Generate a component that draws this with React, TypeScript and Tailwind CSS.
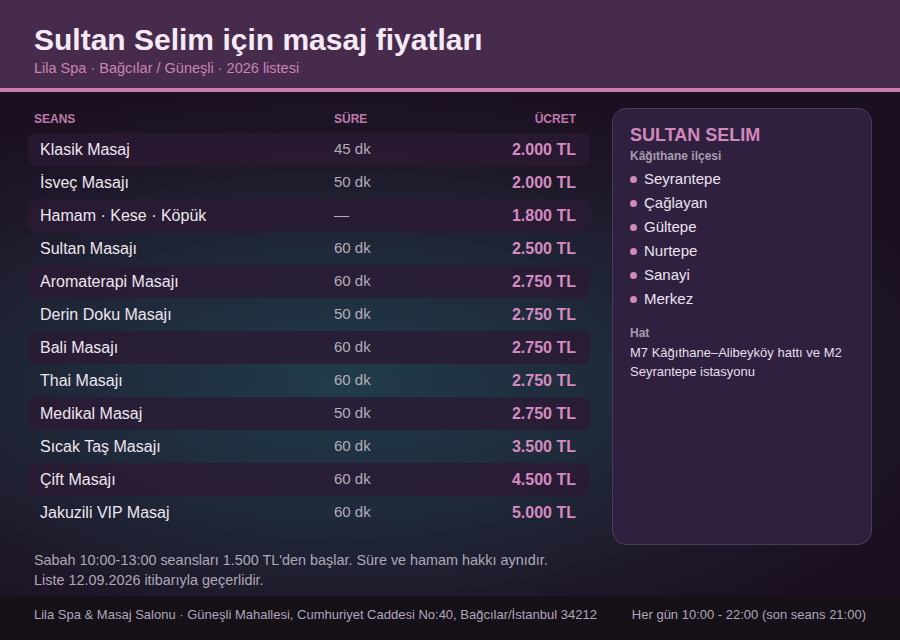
import React from "react";

const rows: [string, string, string][] = [
  ["Klasik Masaj", "45 dk", "2.000 TL"],
  ["İsveç Masajı", "50 dk", "2.000 TL"],
  ["Hamam · Kese · Köpük", "—", "1.800 TL"],
  ["Sultan Masajı", "60 dk", "2.500 TL"],
  ["Aromaterapi Masajı", "60 dk", "2.750 TL"],
  ["Derin Doku Masajı", "50 dk", "2.750 TL"],
  ["Bali Masajı", "60 dk", "2.750 TL"],
  ["Thai Masajı", "60 dk", "2.750 TL"],
  ["Medikal Masaj", "50 dk", "2.750 TL"],
  ["Sıcak Taş Masajı", "60 dk", "3.500 TL"],
  ["Çift Masajı", "60 dk", "4.500 TL"],
  ["Jakuzili VIP Masaj", "60 dk", "5.000 TL"],
];

const hoods = ["Seyrantepe", "Çağlayan", "Gültepe", "Nurtepe", "Sanayi", "Merkez"];

export default function App() {
  return (
    <div
      className="w-[900px] h-[640px] overflow-hidden flex flex-col text-[#ece4ef]"
      style={{ fontFamily: '"Liberation Sans", Arial, sans-serif' }}
    >
      <div className="h-[88px] bg-[#472b4c] px-[34px] pt-[22px] shrink-0">
        <div className="text-[30px] font-bold leading-[36px] text-[#f6e9f6]">Sultan Selim için masaj fiyatları</div>
        <div className="text-[14.5px] leading-[18px] mt-[1px] text-[#c885b6]">Lila Spa · Bağcılar / Güneşli · 2026 listesi</div>
      </div>
      <div className="h-[4px] bg-[#c97fae] shrink-0" />
      <div className="flex-1 flex flex-col bg-[radial-gradient(ellipse_70%_60%_at_38%_58%,#213c4a_0%,#1f2a3a_42%,#1e1628_80%,#1a1020_100%)]">
        <div className="flex px-[28px] pt-[16px] gap-[22px]">
          <div className="w-[562px] -mt-[1px]">
            <div className="flex text-[12px] font-bold text-[#c07aab] h-[26px] items-center pl-[6px] pr-[14px] pb-[3px] leading-none">
              <div className="w-[300px]">SEANS</div>
              <div className="flex-1">SÜRE</div>
              <div className="text-right">ÜCRET</div>
            </div>
            <div className="flex flex-col">
              {rows.map(([n, d, p], i) => (
                <div
                  key={n}
                  className={
                    "flex items-center h-[33px] pl-[12px] pr-[14px] rounded-[8px] " +
                    (i % 2 === 0 ? "bg-[#2a1a33]/80" : "")
                  }
                >
                  <div className="w-[294px] text-[16px] text-[#eee6f0]">{n}</div>
                  <div className="flex-1 text-[15px] text-[#b4adb9]">{d}</div>
                  <div className="text-[16px] font-bold text-[#d58bc0] text-right">{p}</div>
                </div>
              ))}
            </div>
          </div>
          <div className="w-[260px] h-[437px] rounded-[14px] bg-[#30203f] border border-[#4e3b5c] px-[17px] pt-[16px]">
            <div className="text-[18px] font-bold text-[#d088bd] leading-[20px]">SULTAN SELIM</div>
            <div className="text-[12px] font-bold text-[#a89cae] mt-[4px] leading-[14px]">Kâğıthane ilçesi</div>
            <div className="mt-[4px] flex flex-col">
              {hoods.map((h) => (
                <div key={h} className="flex items-center h-[24px] gap-[7px]">
                  <div className="w-[7px] h-[7px] rounded-full bg-[#d088bd]" />
                  <div className="text-[15px] text-[#ece4ef]">{h}</div>
                </div>
              ))}
            </div>
            <div className="text-[12px] font-bold text-[#a89cae] mt-[15px] leading-[14px]">Hat</div>
            <div className="text-[13px] leading-[19px] text-[#e6dfea] mt-[3px]">
              M7 Kâğıthane–Alibeyköy hattı ve M2 Seyrantepe istasyonu
            </div>
          </div>
        </div>
        <div className="px-[34px] mt-[5px] text-[14.4px] leading-[20px] text-[#b0a8b8]">
          <div>Sabah 10:00-13:00 seansları 1.500 TL'den başlar. Süre ve hamam hakkı aynıdır.</div>
          <div>Liste 12.09.2026 itibarıyla geçerlidir.</div>
        </div>
      </div>
      <div className="h-[44px] shrink-0 bg-[#161019] flex items-start pt-[11px] justify-between px-[34px] text-[13px] leading-[16px] text-[#b0a8b8]">
        <div>Lila Spa &amp; Masaj Salonu · Güneşli Mahallesi, Cumhuriyet Caddesi No:40, Bağcılar/İstanbul 34212</div>
        <div>Her gün 10:00 - 22:00 (son seans 21:00)</div>
      </div>
    </div>
  );
}
